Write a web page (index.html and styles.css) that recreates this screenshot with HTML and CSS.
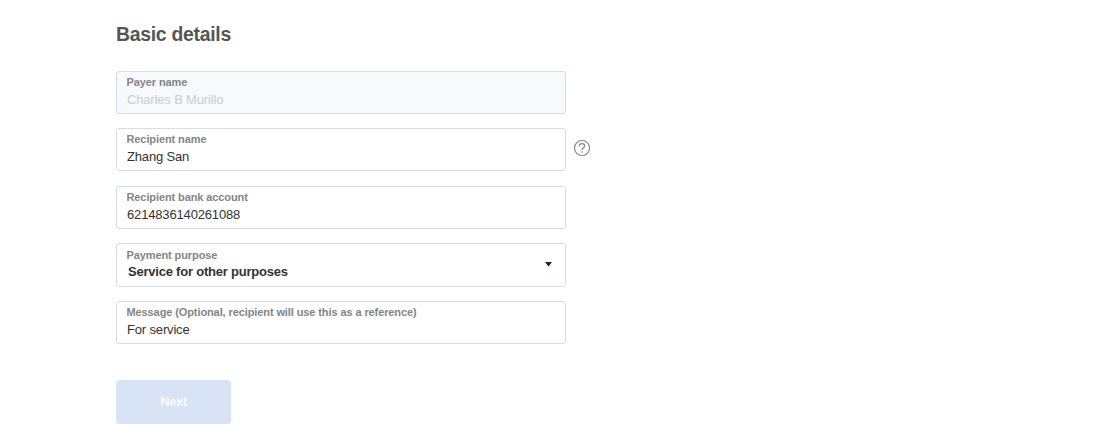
FILE: index.html
```html
<!DOCTYPE html>
<html lang="en">
<head>
	<meta charset="UTF-8">
	<meta name="viewport" content="width=device-width, initial-scale=1.0">
	<title>Basic details</title>
	<link rel="stylesheet" href="styles.css">
</head>
<body>

	<form class="details">
		<h2 class="title">Basic details</h2>

		<div class="field disabled">
			<label class="label" for="payer">Payer name</label>
			<input class="value" id="payer" type="text" value="Charles B Murillo" disabled>
		</div>

		<div class="row">
			<div class="field">
				<label class="label" for="recipient">Recipient name</label>
				<input class="value" id="recipient" type="text" value="Zhang San">
			</div>
			<svg class="help" width="18" height="18" viewBox="0 0 18 18">
				<circle cx="9" cy="9" r="7.5" />
				<path d="M6.3 7.2C6.3 5.5 7.4 4.6 9 4.6S11.7 5.5 11.7 7C11.7 8.8 9 8.9 9 11M9 12.3V13.7" />
			</svg>
		</div>

		<div class="field">
			<label class="label" for="account">Recipient bank account</label>
			<input class="value" id="account" type="text" value="6214836140261088">
		</div>

		<div class="field select">
			<div class="select-text">
				<span class="label">Payment purpose</span>
				<span class="value">Service for other purposes</span>
			</div>
			<svg class="arrow" width="7" height="5" viewBox="0 0 7 5">
				<path d="M0 0H7L3.5 4.5Z" />
			</svg>
		</div>

		<div class="field">
			<label class="label" for="message">Message (Optional, recipient will use this as a reference)</label>
			<input class="value" id="message" type="text" value="For service">
		</div>

		<button class="btn" type="button" disabled>Next</button>
	</form>

</body>
</html>
```

FILE: styles.css
```css
* {
	box-sizing: border-box;
}
body {
	margin: 0;
	background-color: #fff;
}
body, input, button {
	font-family: "Liberation Sans", Arial, sans-serif;
}
.details {
	width: 450px;
	margin-left: 116px;
	padding-top: 22px;
}
.title {
	margin: 0 0 25px;
	font-size: 19.4px;
	line-height: 24px;
	letter-spacing: -0.28px;
	color: #555;
}
.field {
	display: flex;
	flex-direction: column;
	width: 450px;
	height: 43px;
	margin-bottom: 14px;
	padding: 3px 10px 0 9.5px;
	border: 1px solid #d5dbe8;
	border-radius: 3px;
	background-color: #fff;
}
.disabled {
	background-color: #f6fafd;
}
.row {
	display: flex;
	width: 475px;
	margin-bottom: 15px;
}
.row .field {
	margin-bottom: 0;
}
.label {
	display: block;
	font-size: 11px;
	font-weight: bold;
	line-height: 14px;
	letter-spacing: -0.1px;
	color: #858585;
}
.value {
	display: block;
	height: 18px;
	margin: 2px 0 0;
	padding: 0 0 0 0.5px;
	border: none;
	background-color: transparent;
	font-size: 13px;
	line-height: 18px;
	letter-spacing: -0.16px;
	color: #333;
	outline: none;
}
.disabled .value {
	color: #ccc;
}
.help {
	margin: 11px 0 0 7px;
	fill: none;
	stroke: #858585;
	stroke-width: 1.2;
}
.select {
	flex-direction: row;
	justify-content: space-between;
	height: 44px;
	padding-top: 4px;
	padding-right: 13px;
}
.select .value {
	margin-top: 1px;
	padding-left: 1.5px;
	font-weight: bold;
	letter-spacing: -0.22px;
}
.arrow {
	margin-top: 14px;
	fill: #222;
}
.btn {
	width: 115px;
	height: 44px;
	margin-top: 22px;
	padding-bottom: 2px;
	border: none;
	border-radius: 4px;
	background-color: #d8e3f5;
	font-size: 13px;
	font-weight: bold;
	letter-spacing: -0.4px;
	color: #f8fafe;
}
```
